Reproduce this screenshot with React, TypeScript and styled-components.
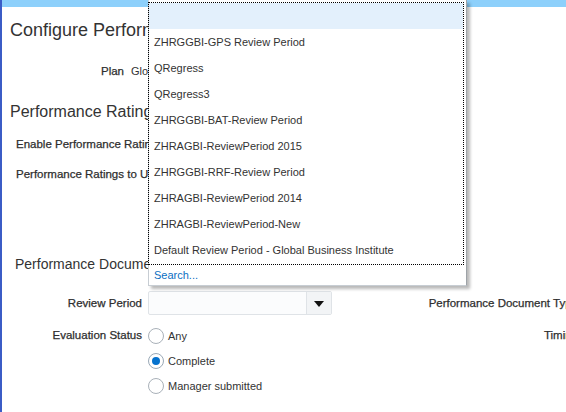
import styled, { createGlobalStyle } from "styled-components";

const GlobalStyle = createGlobalStyle`
  html, body {
    margin: 0;
    padding: 0;
    background: #ffffff;
  }
  body {
    font-family: "Liberation Sans", Arial, Helvetica, sans-serif;
    color: #333333;
  }
  * {
    box-sizing: border-box;
  }
`;

const reviewPeriods = [
  "",
  "ZHRGGBI-GPS Review Period",
  "QRegress",
  "QRegress3",
  "ZHRGGBI-BAT-Review Period",
  "ZHRAGBI-ReviewPeriod 2015",
  "ZHRGGBI-RRF-Review Period",
  "ZHRAGBI-ReviewPeriod 2014",
  "ZHRAGBI-ReviewPeriod-New",
  "Default Review Period - Global Business Institute",
];

const statuses = [
  { label: "Any", checked: false },
  { label: "Complete", checked: true },
  { label: "Manager submitted", checked: false },
];

export default function App() {
  return (
    <>
      <GlobalStyle />
      <Page>
        <TopBar />
        <PageTitle>Configure Performance Document Options</PageTitle>
        <PlanRow>
          <Label>Plan</Label>
          <Value>Global Performance Plan</Value>
        </PlanRow>
        <SectionTitle>Performance Ratings</SectionTitle>
        <OptionLine $gap={13}>Enable Performance Ratings</OptionLine>
        <OptionLine $gap={14}>Performance Ratings to Use</OptionLine>
        <SubTitle>Performance Documents</SubTitle>
        <FormGrid>
          <Label $lh={24}>Review Period</Label>
          <SelectBox>
            <SelectInput />
            <SelectButton>
              <Arrow />
            </SelectButton>
          </SelectBox>
          <Label $lh={24}>Performance Document Type</Label>

          <Label $lh={25}>Evaluation Status</Label>
          <RadioGroup>
            {statuses.map((s) => (
              <RadioRow key={s.label}>
                <RadioCircle $checked={s.checked} />
                <span>{s.label}</span>
              </RadioRow>
            ))}
          </RadioGroup>
          <Label $lh={25}>Timing</Label>
        </FormGrid>

        {/* open list of the Review Period choice */}
        <Popup>
          <OptionList>
            {reviewPeriods.map((p, i) => (
              <OptionItem key={i} $active={i === 0}>
                {p}
              </OptionItem>
            ))}
          </OptionList>
          <SearchRow>Search...</SearchRow>
        </Popup>
      </Page>
    </>
  );
}

const Page = styled.div`
  position: relative;
  width: 566px;
  height: 412px;
  overflow: hidden;
  border-left: 2px solid #3b5cc6;
  background: #ffffff;
  font-size: 11px;
`;

const TopBar = styled.div`
  height: 7px;
  background: #8dd0fb;
`;

const PageTitle = styled.h1`
  margin: 11px 0 0 8px;
  font-size: 18px;
  line-height: 24px;
  font-weight: normal;
  color: #333333;
  white-space: nowrap;
`;

const PlanRow = styled.div`
  display: grid;
  grid-template-columns: 122px auto;
  column-gap: 7px;
  margin-top: 21px;
  line-height: 16px;
`;

const Label = styled.div<{ $lh?: number }>`
  text-align: right;
  font-size: 11.5px;
  line-height: ${(p) => (p.$lh ? `${p.$lh}px` : "16px")};
  color: #2e2e2e;
  -webkit-text-stroke: 0.25px #2e2e2e;
  white-space: nowrap;
`;

const Value = styled.div`
  font-size: 11px;
  color: #333333;
  white-space: nowrap;
`;

const SectionTitle = styled.h2`
  margin: 22px 0 0 8px;
  font-size: 16px;
  line-height: 22px;
  font-weight: normal;
  color: #333333;
  white-space: nowrap;
`;

const OptionLine = styled.div<{ $gap: number }>`
  margin: ${(p) => p.$gap}px 0 0 14px;
  font-size: 11.5px;
  line-height: 16px;
  color: #2e2e2e;
  -webkit-text-stroke: 0.25px #2e2e2e;
  white-space: nowrap;
`;

const SubTitle = styled.h3`
  margin: 72px 0 0 13px;
  font-size: 14px;
  line-height: 20px;
  font-weight: normal;
  color: #333333;
  white-space: nowrap;
`;

const FormGrid = styled.div`
  display: grid;
  grid-template-columns: 140px 184px 240px;
  column-gap: 6px;
  row-gap: 8px;
  margin-top: 17px;
  align-items: start;
`;

const SelectBox = styled.div`
  display: flex;
  height: 24px;
  border: 1px solid #dfe3e7;
  border-radius: 2px;
  background: #fbfcfd;
  overflow: hidden;
`;

const SelectInput = styled.div`
  flex: 1;
`;

const SelectButton = styled.div`
  width: 25px;
  display: flex;
  align-items: center;
  justify-content: center;
  border-left: 1px solid #dfe3e7;
  background: #f2f4f6;
`;

const Arrow = styled.div`
  width: 0;
  height: 0;
  border-left: 5px solid transparent;
  border-right: 5px solid transparent;
  border-top: 6px solid #111111;
  margin-top: 1px;
`;

const RadioGroup = styled.div`
  display: flex;
  flex-direction: column;
`;

const RadioRow = styled.div`
  display: flex;
  align-items: center;
  gap: 4px;
  height: 25px;
  font-size: 11px;
  color: #333333;
`;

const RadioCircle = styled.span<{ $checked: boolean }>`
  position: relative;
  width: 16px;
  height: 16px;
  border-radius: 50%;
  border: 1px solid ${(p) => (p.$checked ? "#9aa9b7" : "#a9b1b9")};
  background: #ffffff;

  &::after {
    content: "";
    display: ${(p) => (p.$checked ? "block" : "none")};
    position: absolute;
    left: 3px;
    top: 3px;
    width: 8px;
    height: 8px;
    border-radius: 50%;
    background: #0572ce;
  }
`;

const Popup = styled.div`
  position: absolute;
  left: 146px;
  top: 0;
  width: 319px;
  background: #ffffff;
  border: 1px solid #c7cdd3;
  border-top: none;
  border-right-color: #9ea3a8;
  box-shadow: 3px 3px 3px rgba(0, 0, 0, 0.28);
`;

const OptionList = styled.div`
  margin: 2px 2px 0 -1px;
  padding-bottom: 1px;
  border: 1px dotted #000000;
`;

const OptionItem = styled.div<{ $active: boolean }>`
  height: 26px;
  line-height: 26px;
  padding-left: 5px;
  font-size: 11px;
  color: #333333;
  white-space: nowrap;
  background: ${(p) => (p.$active ? "#e3f0fc" : "#ffffff")};
`;

const SearchRow = styled.div`
  height: 20px;
  line-height: 20px;
  padding-left: 5px;
  font-size: 11px;
  color: #0b6fc2;
`;
